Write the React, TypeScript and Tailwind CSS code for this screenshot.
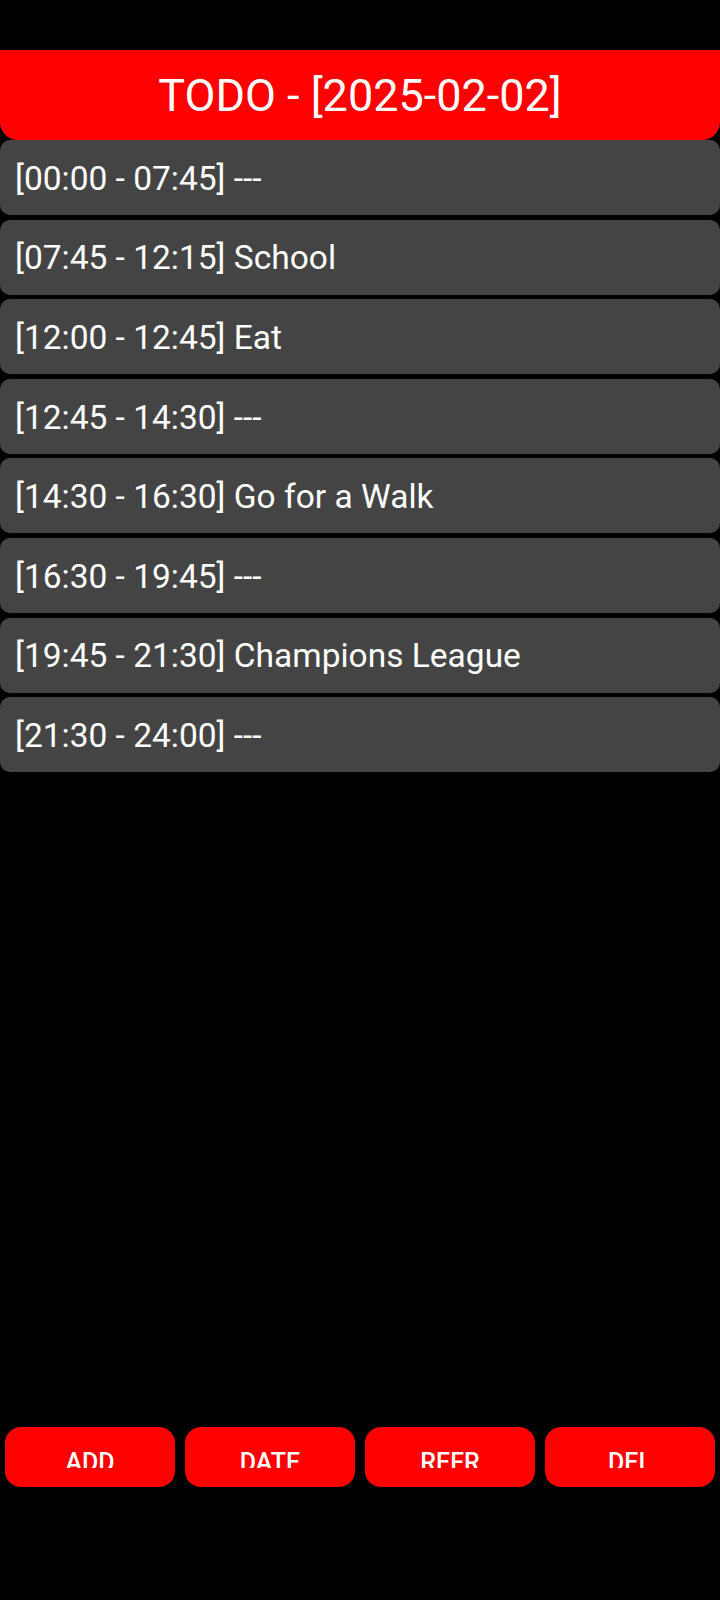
const entries = [
  '[00:00 - 07:45] ---',
  '[07:45 - 12:15] School',
  '[12:00 - 12:45] Eat',
  '[12:45 - 14:30] ---',
  '[14:30 - 16:30] Go for a Walk',
  '[16:30 - 19:45] ---',
  '[19:45 - 21:30] Champions League',
  '[21:30 - 24:00] ---',
];

const actions = ['ADD', 'DATE', 'REFR', 'DEL'];

export default function App() {
  return (
    <div className="h-[1600px] bg-black flex flex-col font-['Roboto',sans-serif] text-white">
      <div className="h-[50px]" />

      <header className="h-[90px] bg-[#ff0000] rounded-b-[18px] flex items-center justify-center">
        <h1 className="text-[45px] leading-none">TODO - [2025-02-02]</h1>
      </header>

      <ul className="flex flex-col gap-[4.6px]">
        {entries.map((entry) => (
          <li
            key={entry}
            className="h-[75px] bg-[#444444] rounded-[10px] flex items-center px-[15px] pt-[3px] text-[33.5px]"
          >
            {entry}
          </li>
        ))}
      </ul>

      <div className="flex-1" />

      <div className="grid grid-cols-4 gap-[10px] px-[5px]">
        {actions.map((label) => (
          <button
            key={label}
            className="h-[60px] bg-[#ff0000] rounded-[16px] flex justify-center"
          >
            <div className="h-[41px] overflow-hidden pt-[21px]">
              <span className="block text-[25px] leading-[30px] font-medium">{label}</span>
            </div>
          </button>
        ))}
      </div>

      <div className="h-[113px]" />
    </div>
  );
}
